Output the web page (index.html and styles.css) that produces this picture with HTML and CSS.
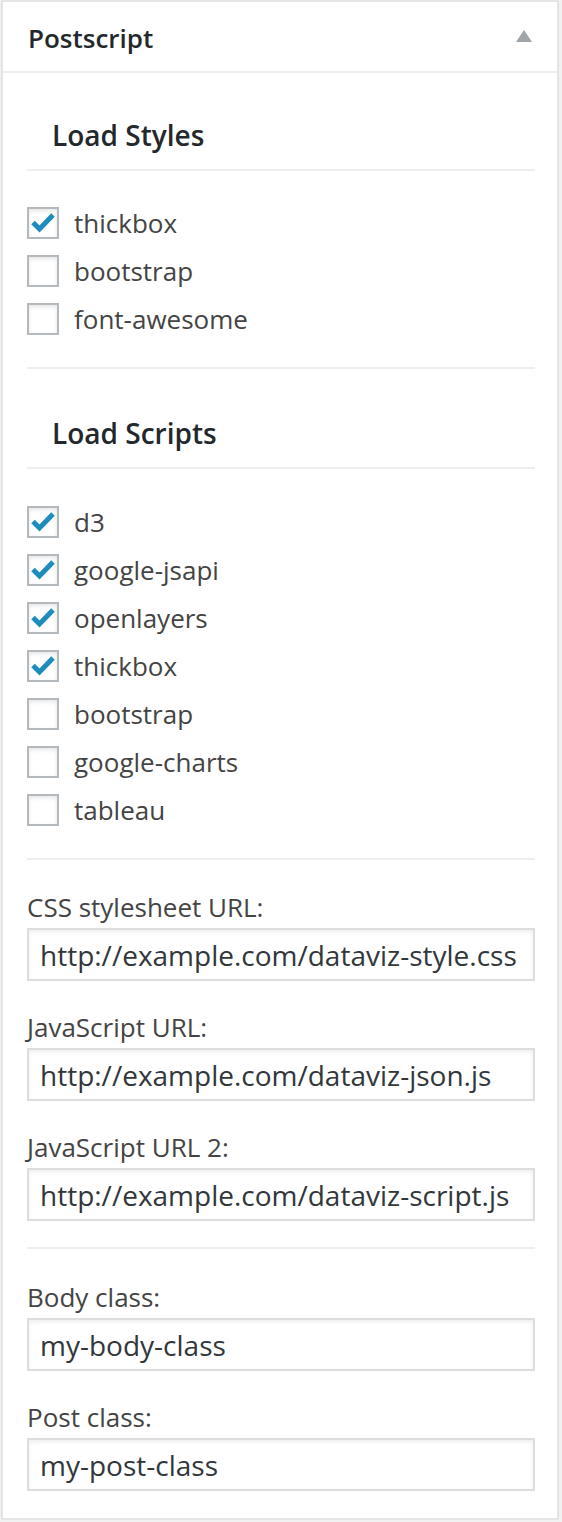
FILE: index.html
```html
<!DOCTYPE html>
<html>
<head>
<meta charset="utf-8">
<link rel="stylesheet" href="styles.css">
</head>
<body>
<div class="postbox">
  <div class="postbox-header">
    <h2 class="title">Postscript</h2>
    <svg class="toggle" width="16" height="12" viewBox="0 0 16 12"><polygon points="8,0 16,12 0,12" fill="#a0a5aa"/></svg>
  </div>
  <div class="inside">
    <div class="section">
      <h4 class="section-title">Load Styles</h4>
      <ul class="checklist">
        <li><span class="cb checked"><svg viewBox="0 0 32 32" width="32" height="32"><polyline points="6,15.5 12.5,22 26,8" fill="none" stroke="#1e8cbe" stroke-width="5"/></svg></span><span class="lbl">thickbox</span></li>
        <li><span class="cb"></span><span class="lbl">bootstrap</span></li>
        <li><span class="cb"></span><span class="lbl">font-awesome</span></li>
      </ul>
    </div>
    <div class="section second">
      <h4 class="section-title">Load Scripts</h4>
      <ul class="checklist">
        <li><span class="cb checked"><svg viewBox="0 0 32 32" width="32" height="32"><polyline points="6,15.5 12.5,22 26,8" fill="none" stroke="#1e8cbe" stroke-width="5"/></svg></span><span class="lbl">d3</span></li>
        <li><span class="cb checked"><svg viewBox="0 0 32 32" width="32" height="32"><polyline points="6,15.5 12.5,22 26,8" fill="none" stroke="#1e8cbe" stroke-width="5"/></svg></span><span class="lbl">google-jsapi</span></li>
        <li><span class="cb checked"><svg viewBox="0 0 32 32" width="32" height="32"><polyline points="6,15.5 12.5,22 26,8" fill="none" stroke="#1e8cbe" stroke-width="5"/></svg></span><span class="lbl">openlayers</span></li>
        <li><span class="cb checked"><svg viewBox="0 0 32 32" width="32" height="32"><polyline points="6,15.5 12.5,22 26,8" fill="none" stroke="#1e8cbe" stroke-width="5"/></svg></span><span class="lbl">thickbox</span></li>
        <li><span class="cb"></span><span class="lbl">bootstrap</span></li>
        <li><span class="cb"></span><span class="lbl">google-charts</span></li>
        <li><span class="cb"></span><span class="lbl">tableau</span></li>
      </ul>
    </div>
    <div class="fields">
      <div class="field">
        <label class="field-label">CSS stylesheet URL:</label>
        <div class="input">http://example.com/dataviz-style.css</div>
      </div>
      <div class="field">
        <label class="field-label">JavaScript URL:</label>
        <div class="input">http://example.com/dataviz-json.js</div>
      </div>
      <div class="field">
        <label class="field-label">JavaScript URL 2:</label>
        <div class="input">http://example.com/dataviz-script.js</div>
      </div>
    </div>
    <div class="fields last">
      <div class="field">
        <label class="field-label">Body class:</label>
        <div class="input">my-body-class</div>
      </div>
      <div class="field">
        <label class="field-label">Post class:</label>
        <div class="input">my-post-class</div>
      </div>
    </div>
  </div>
</div>
</body>
</html>
```

FILE: styles.css
```css
html, body {
  margin: 0;
  padding: 0;
}
body {
  background: #f1f1f1;
  font-family: "Open Sans", "Noto Sans", sans-serif;
  padding: 0 3px 3px 1px;
}
.postbox {
  background: #fff;
  border: 2px solid #e5e5e5;
}
.postbox-header {
  height: 69px;
  border-bottom: 2px solid #eeeeee;
  display: flex;
  align-items: center;
  justify-content: space-between;
  padding: 0 25px 0 25px;
}
.title {
  margin: 0;
  margin-top: 3px;
  font-size: 26px;
  font-weight: 600;
  color: #23282d;
  line-height: 36px;
}
.toggle {
  display: block;
  margin-top: -2px;
}
.inside {
  padding: 0 22px 27px 24px;
}
.section {
  border-bottom: 2px solid #eeeeee;
  padding-bottom: 32px;
}
.section-title {
  margin: 0;
  padding: 44px 0 16px 25px;
  border-bottom: 2px solid #eeeeee;
  font-size: 28px;
  font-weight: 600;
  color: #23282d;
  line-height: 36px;
}
.section.second .section-title {
  padding-top: 46px;
  padding-bottom: 16px;
}
.checklist {
  list-style: none;
  margin: 0;
  padding: 36px 0 0 0;
  display: flex;
  flex-direction: column;
  gap: 16px;
}
.section.second .checklist {
  padding-top: 37px;
}
.checklist li {
  display: flex;
  align-items: center;
  height: 32px;
}
.cb {
  width: 32px;
  height: 32px;
  box-sizing: border-box;
  border: 2px solid #b4b9be;
  background: #fff;
  box-shadow: inset 0 2px 4px rgba(0,0,0,0.1);
  position: relative;
  flex: none;
}
.cb svg {
  position: absolute;
  left: -2px;
  top: -2px;
}
.lbl {
  margin-left: 15px;
  font-size: 26px;
  color: #444;
  line-height: 32px;
}
.fields {
  border-bottom: 2px solid #eeeeee;
  padding: 29px 0 26px;
  display: flex;
  flex-direction: column;
  gap: 28px;
}
.fields.last {
  border-bottom: none;
  padding: 30px 0 0;
}
.field {
  display: flex;
  flex-direction: column;
}
.field-label {
  font-size: 26px;
  color: #444;
  line-height: 36px;
  margin-bottom: 3px;
}
.input {
  height: 53px;
  box-sizing: border-box;
  border: 2px solid #dddddd;
  box-shadow: inset 0 2px 4px rgba(0,0,0,0.07);
  padding: 0 10px 0 11px;
  display: flex;
  align-items: center;
  font-size: 28px;
  color: #32373c;
  white-space: nowrap;
  overflow: hidden;
}
```
